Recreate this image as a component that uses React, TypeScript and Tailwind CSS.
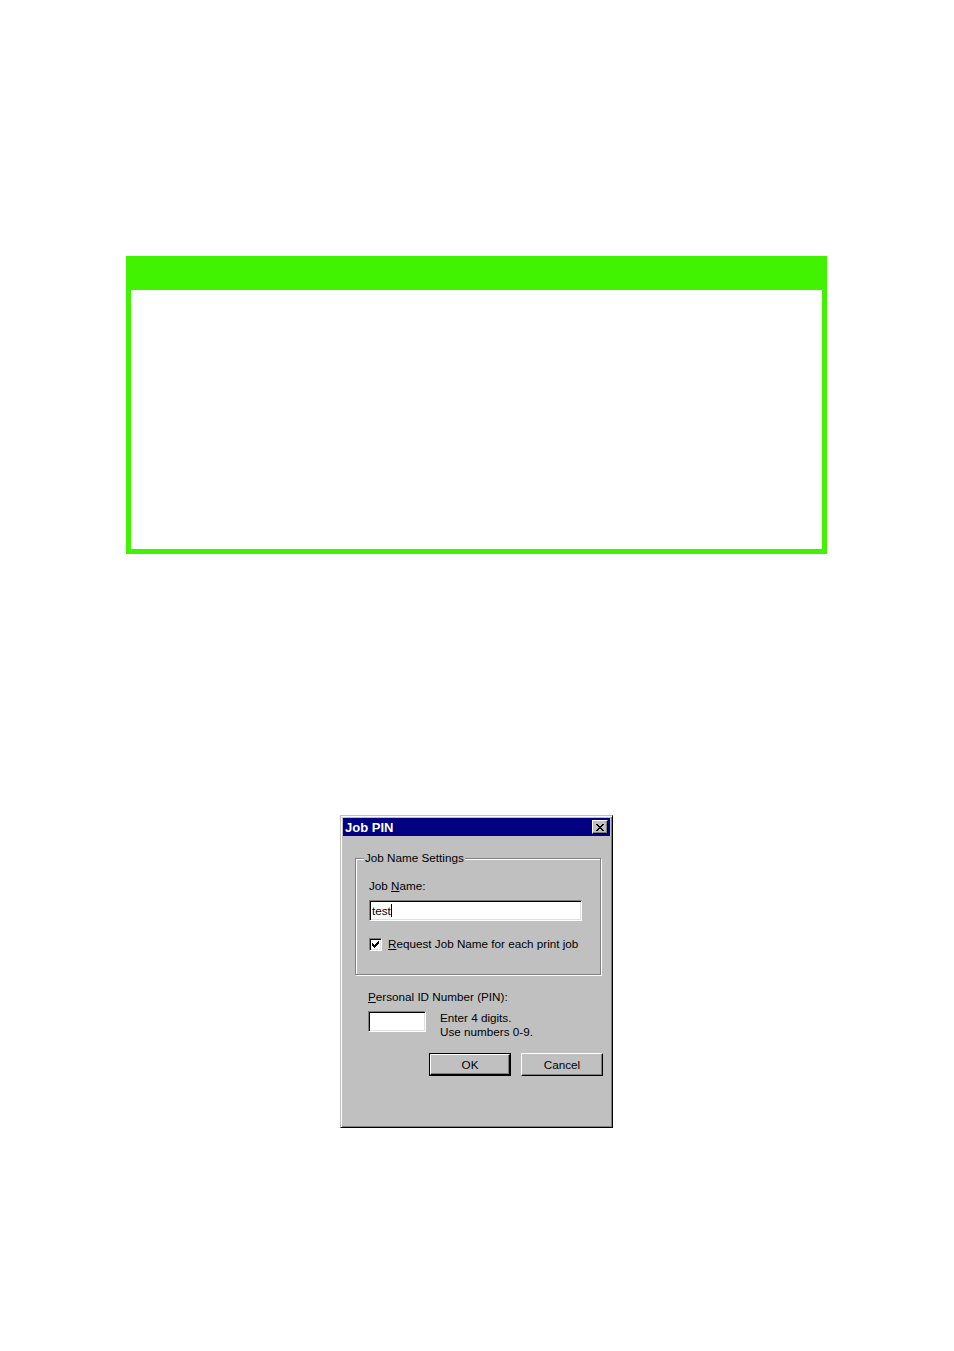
import React from "react";

const font = { fontFamily: '"Liberation Sans", Arial, sans-serif' };

const Sunken = ({ className, children }: { className: string; children?: React.ReactNode }) => (
  <div
    className={`bg-white border border-t-[#808080] border-l-[#808080] border-b-white border-r-white shadow-[inset_1px_1px_0_#000,inset_-1px_-1px_0_#dfdfdf] ${className}`}
  >
    {children}
  </div>
);

const Button = ({ label, isDefault }: { label: string; isDefault?: boolean }) => (
  <div
    className={`w-[82px] h-[23px] ${isDefault ? "border border-black" : ""}`}
  >
    <div
      className={`h-full flex items-center justify-center text-[11.7px] text-black bg-[#c0c0c0] border border-t-white border-l-white border-r-black border-b-black shadow-[inset_-1px_-1px_0_#808080]`}
    >
      {label}
    </div>
  </div>
);

const JobPinDialog = () => {
  return (
    <div
      className="w-[273px] h-[313px] bg-[#c0c0c0] border border-t-[#c0c0c0] border-l-[#c0c0c0] border-r-black border-b-black shadow-[inset_1px_1px_0_#fff,inset_-1px_-1px_0_#808080] p-[2px] flex flex-col text-black"
      style={font}
    >
      {/* title bar */}
      <div className="h-[18px] bg-[#000080] flex items-center justify-between pl-[2px] pr-[2px]">
        <span className="text-white font-bold text-[13px] leading-none">Job PIN</span>
        <div className="w-[16px] h-[14px] bg-[#c0c0c0] border border-t-white border-l-white border-r-black border-b-black shadow-[inset_-1px_-1px_0_#808080] flex items-center justify-center">
          <svg width="8" height="7" viewBox="0 0 8 7">
            <path d="M0 0h2v1h1v1h2v-1h1v-1h2v1h-1v1h-1v1h-1v1h1v1h1v1h1v1h-2v-1h-1v-1h-2v1h-1v1h-2v-1h1v-1h1v-1h1v-1h-1v-1h-1v-1h-1z" fill="#000" />
          </svg>
        </div>
      </div>

      <div className="pl-[12px] pr-[6px] text-[11.7px] leading-[14px]">
        {/* group box */}
        <fieldset className="mt-[15px] w-[246px] border border-[#808080] shadow-[inset_1px_1px_0_#fff,1px_1px_0_#fff] pl-[13px] pb-[23px]">
          <legend className="-ml-[5px] px-[1px] bg-[#c0c0c0] leading-[14px]">Job Name Settings</legend>
          <div className="mt-[14px]">
            Job <u>N</u>ame:
          </div>
          <Sunken className="mt-[7px] w-[213px] h-[21px] flex items-center pl-[2px]">
            <span>test</span>
            <span className="w-px h-[13px] bg-black" />
          </Sunken>
          <div className="mt-[16px] flex items-center">
            <Sunken className="w-[13px] h-[13px] flex items-center justify-center">
              <svg width="7" height="7" viewBox="0 0 7 7">
                <path d="M0 2h1v1h1v1h1v-1h1v-1h1v-1h1v-1h1v3h-1v1h-1v1h-1v1h-1v1h-1v-1h-1v-1h-1z" fill="#000" />
              </svg>
            </Sunken>
            <span className="ml-[6px]">
              <u>R</u>equest Job Name for each print job
            </span>
          </div>
        </fieldset>

        {/* PIN */}
        <div className="ml-[13px] mt-[15px]">
          <div>
            <u>P</u>ersonal ID Number (PIN):
          </div>
          <div className="mt-[7px] flex items-start">
            <Sunken className="w-[58px] h-[21px]" />
            <div className="ml-[14px]">
              <div>Enter 4 digits.</div>
              <div>Use numbers 0-9.</div>
            </div>
          </div>
        </div>

        <div className="mt-[14px] flex justify-end gap-[10px] pr-[1px]">
          <Button label="OK" isDefault />
          <Button label="Cancel" />
        </div>
      </div>
    </div>
  );
};

export default function App() {
  return (
    <div className="w-[954px] h-[1351px] bg-white pt-[256px]">
      <div className="ml-[126px] w-[701px] h-[298px] border-x-[5px] border-b-[5px] border-[#41f300] flex flex-col">
        <div className="h-[34px] bg-[#41f300]" />
        <div className="flex-1 bg-white" />
      </div>
      <div className="ml-[340px] mt-[261px]">
        <JobPinDialog />
      </div>
    </div>
  );
}
